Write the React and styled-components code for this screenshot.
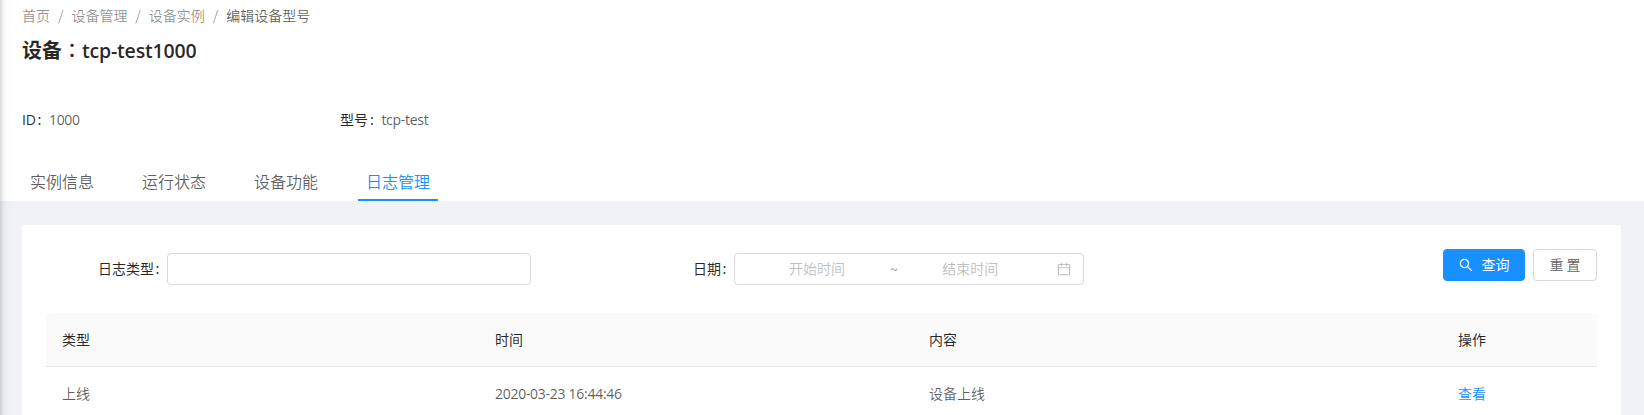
import React from 'react';
import styled, { createGlobalStyle } from 'styled-components';

const GlobalStyle = createGlobalStyle`
  * { box-sizing: border-box; }
  body {
    margin: 0;
    overflow: hidden;
    background: #f0f2f5;
    color: rgba(0, 0, 0, 0.65);
    font: 14px/22px "Noto Sans CJK SC", sans-serif;
    font-weight: 350;
  }
`;

const Page = styled.div`
  position: relative;
  height: 415px;
  overflow: hidden;
`;

const EdgeShadow = styled.div`
  position: absolute;
  inset: 0 auto 0 0;
  width: 20px;
  background: linear-gradient(90deg, rgba(0, 21, 41, 0.16), rgba(0, 21, 41, 0.06) 3px, rgba(0, 21, 41, 0.015) 6px, transparent 12px);
`;

const Header = styled.header`
  height: 201px;
  padding: 4px 22px 0;
  background: #fff;
`;

const Breadcrumb = styled.nav`
  display: flex;
  height: 22px;
  color: rgba(0, 0, 0, 0.45);
`;

const Crumb = styled.span`
  color: ${(p) => (p.$current ? 'rgba(0, 0, 0, 0.65)' : 'inherit')};
`;

const Separator = styled.span`
  width: 21.4px;
  text-align: center;
`;

const Latin = styled.span`
  font-family: "Open Sans", "Noto Sans", sans-serif;
  font-size: ${(p) => p.$size || 14}px;
  font-weight: ${(p) => p.$weight || 400};
  line-height: 1;
  letter-spacing: ${(p) => p.$spacing || -0.28}px;
`;

const Title = styled.h1`
  display: flex;
  align-items: baseline;
  height: 32px;
  margin: 8px 0 0;
  color: rgba(0, 0, 0, 0.85);
  font-size: 20px;
  font-weight: 600;
  line-height: 32px;
`;

const TitleColon = styled.span`
  font-family: "Noto Sans CJK TC", sans-serif;
  font-weight: 500;
  line-height: 1;
`;

const Facts = styled.dl`
  display: flex;
  height: 22px;
  margin: 42px 0 0;
`;

const Fact = styled.div`
  display: flex;
  width: 318px;
`;

const FactLabel = styled.dt`
  color: rgba(0, 0, 0, 0.85);
  font-weight: 400;
  &::after { content: ":"; margin: 0 7.5px 0 2px; }
`;

const FactValue = styled.dd`
  margin: 0;
`;

const Tabs = styled.div`
  display: flex;
  gap: 32px;
  margin-top: 28px;
`;

const Tab = styled.div`
  height: 43px;
  padding: 11px 8px 0;
  border-bottom: 2px solid ${(p) => (p.$active ? '#1890ff' : 'transparent')};
  color: ${(p) => (p.$active ? '#1890ff' : 'inherit')};
  font-size: 16px;
  line-height: 24px;
`;

const Card = styled.main`
  height: 230px;
  margin: 24px 23px 0 22px;
  padding: 24px 24px 0;
  border-radius: 2px;
  background: #fff;
`;

const Filters = styled.div`
  display: flex;
  height: 64px;
`;

const Field = styled.label`
  display: flex;
  align-items: center;
  height: 32px;
  margin-top: 4px;
`;

const FieldLabel = styled.span`
  width: ${(p) => p.$width}px;
  padding: 0 7.500px 2px 0;
  color: rgba(0, 0, 0, 0.85);
  font-weight: 400;
  text-align: right;
  &::after { content: ":"; margin-left: 1.5px; }
`;

const Control = styled.span`
  display: flex;
  align-items: center;
  width: ${(p) => p.$width}px;
  height: 32px;
  border: 1px solid #d9d9d9;
  border-radius: 4px;
  background: #fff;
`;

const RangePart = styled.span`
  width: ${(p) => p.$width}px;
  padding: 0 0 2px ${(p) => p.$indent || 0}px;
  color: #bfbfbf;
  text-align: center;
`;

const Tilde = styled.span`
  color: rgba(0, 0, 0, 0.5);
`;

const CalendarIcon = styled.svg`
  margin-left: auto;
  margin-right: 11px;
  color: #bfbfbf;
`;

const SearchIcon = styled.svg`
  margin: 2px 1px 0 -1px;
`;

const Actions = styled.div`
  display: flex;
  gap: 8px;
  margin-left: auto;
`;

const Button = styled.button`
  display: flex;
  align-items: center;
  justify-content: center;
  gap: 7px;
  width: ${(p) => (p.$primary ? 82 : 64)}px;
  height: 32px;
  padding: 0 0 2px;
  border: 1px solid ${(p) => (p.$primary ? '#1890ff' : '#d9d9d9')};
  border-radius: 4px;
  background: ${(p) => (p.$primary ? '#1890ff' : '#fff')};
  box-shadow: 0 2px 0 rgba(0, 0, 0, 0.02);
  color: ${(p) => (p.$primary ? '#fff' : 'rgba(0, 0, 0, 0.65)')};
  font: inherit;
  font-weight: ${(p) => (p.$primary ? 400 : 350)};
`;

const Table = styled.table`
  width: 100%;
  table-layout: fixed;
  border-collapse: separate;
  border-spacing: 0;
  text-align: left;
`;

const Th = styled.th`
  width: ${(p) => p.$width}px;
  height: 54px;
  padding: 0 16px 2px;
  border-bottom: 1px solid #e8e8e8;
  background: #fafafa;
  color: rgba(0, 0, 0, 0.85);
  font-weight: 400;
  &:first-child { border-top-left-radius: 4px; }
  &:last-child { border-top-right-radius: 4px; }
`;

const Td = styled.td`
  height: 55px;
  padding: 0 16px 2px;
  border-bottom: 1px solid #e8e8e8;
`;

const Link = styled.a`
  color: #1890ff;
`;

const crumbs = ['首页', '设备管理', '设备实例', '编辑设备型号'];
const tabs = ['实例信息', '运行状态', '设备功能', '日志管理'];
const columns = [['类型', 433], ['时间', 434], ['内容', 529], ['操作', 155]];

export default function App() {
  return (
    <Page>
      <GlobalStyle />
      <Header>
        <Breadcrumb>
          {crumbs.map((c, i) => (
            <React.Fragment key={c}>
              {i > 0 && <Separator>/</Separator>}
              <Crumb $current={i === crumbs.length - 1}>{c}</Crumb>
            </React.Fragment>
          ))}
        </Breadcrumb>
        <Title>
          设备<TitleColon>：</TitleColon>
          <Latin $size={19.5} $weight={600} $spacing={-0.18}>tcp-test1000</Latin>
        </Title>
        <Facts>
          <Fact>
            <FactLabel><Latin>ID</Latin></FactLabel>
            <FactValue><Latin>1000</Latin></FactValue>
          </Fact>
          <Fact>
            <FactLabel>型号</FactLabel>
            <FactValue><Latin>tcp-test</Latin></FactValue>
          </Fact>
        </Facts>
        <Tabs>
          {tabs.map((t, i) => <Tab key={t} $active={i === 3}>{t}</Tab>)}
        </Tabs>
      </Header>
      <Card>
        <Filters>
          <Field>
            <FieldLabel $width={121}>日志类型</FieldLabel>
            <Control $width={364} />
          </Field>
          <Field>
            <FieldLabel $width={203}>日期</FieldLabel>
            <Control $width={350}>
              <RangePart $indent={9} $width={155}>开始时间</RangePart>
              <Tilde>~</Tilde>
              <RangePart $width={145}>结束时间</RangePart>
              <CalendarIcon width="16" height="16" viewBox="0 0 1024 1024" fill="currentColor">
                <path d="M880 184H712v-64c0-4.400-3.600-8-8-8h-56c-4.400 0-8 3.600-8 8v64H384v-64c0-4.400-3.600-8-8-8h-56c-4.400 0-8 3.600-8 8v64H144c-17.700 0-32 14.300-32 32v664c0 17.700 14.300 32 32 32h736c17.700 0 32-14.300 32-32V216c0-17.700-14.300-32-32-32zm-40 656H184V460h656v380zM184 392V256h128v48c0 4.400 3.600 8 8 8h56c4.400 0 8-3.600 8-8v-48h256v48c0 4.400 3.600 8 8 8h56c4.400 0 8-3.600 8-8v-48h128v136H184z" />
              </CalendarIcon>
            </Control>
          </Field>
          <Actions>
            <Button $primary>
              <SearchIcon width="16" height="16" viewBox="0 0 1024 1024" fill="currentColor">
                <path d="M909.600 854.500L649.900 594.800C690.200 542.700 712 479 712 412c0-80.200-31.300-155.400-87.900-212.100-56.600-56.700-132-87.900-212.100-87.900s-155.500 31.300-212.100 87.900C143.200 256.500 112 331.800 112 412c0 80.100 31.300 155.500 87.900 212.100C256.500 680.800 331.800 712 412 712c67 0 130.600-21.800 182.700-62l259.700 259.600a8.200 8.200 0 0 0 11.600 0l43.600-43.500a8.200 8.200 0 0 0 0-11.600zM570.400 570.400C528 612.700 471.800 636 412 636s-116-23.300-158.400-65.600C211.300 528 188 471.800 188 412s23.300-116.100 65.600-158.400C296 211.300 352.200 188 412 188s116.100 23.200 158.400 65.600S636 352.200 636 412s-23.300 116.100-65.600 158.400z" />
              </SearchIcon>
              查询
            </Button>
            <Button>重 置</Button>
          </Actions>
        </Filters>
        <Table>
          <thead>
            <tr>{columns.map(([c, w]) => <Th key={c} $width={w}>{c}</Th>)}</tr>
          </thead>
          <tbody>
            <tr>
              <Td>上线</Td>
              <Td><Latin>2020-03-23 16:44:46</Latin></Td>
              <Td>设备上线</Td>
              <Td><Link>查看</Link></Td>
            </tr>
          </tbody>
        </Table>
      </Card>
      <EdgeShadow />
    </Page>
  );
}
